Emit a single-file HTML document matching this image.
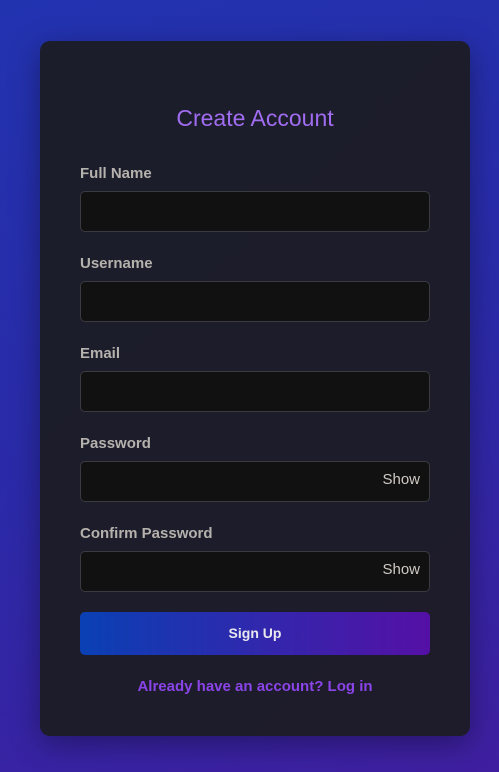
<!DOCTYPE html>
<html><head><style>
body{margin:0;width:499px;height:772px;background:linear-gradient(160deg,#2233b0 0%,#2a2aa8 50%,#3f1fa0 100%);font-family:"Liberation Sans",sans-serif;position:relative;overflow:hidden}
.card{position:absolute;left:40px;top:41px;width:430px;height:695px;background:linear-gradient(135deg,#1b1d2b,#1e1c2b);border-radius:10px;box-shadow:0 8px 30px rgba(0,0,0,.35)}
h1{position:absolute;top:63px;left:0;width:100%;margin:0;text-align:center;font-size:23px;font-weight:normal;color:#a06cf0;line-height:28px}
.lab{position:absolute;left:40px;font-size:15px;font-weight:bold;color:#b5b1ac;line-height:18px}
.inp{position:absolute;left:40px;width:348px;height:39px;background:#111;border:1px solid #3a3a40;border-radius:5px}
.show{position:absolute;right:9px;top:9px;font-size:15px;color:#cfcac4}
.btn{position:absolute;left:40px;top:571px;width:350px;height:43px;border-radius:5px;background:linear-gradient(90deg,#0a40b4,#5510a6);color:#e8e8ee;font-weight:bold;font-size:14px;text-align:center;line-height:43px}
.lnk{position:absolute;top:637px;left:0;width:100%;text-align:center;font-size:15px;color:#8a44e8;font-weight:bold}
</style></head><body>
<div class="card">
<h1>Create Account</h1>
<div class="lab" style="top:124px">Full Name</div><div class="inp" style="top:150px"></div>
<div class="lab" style="top:214px">Username</div><div class="inp" style="top:240px"></div>
<div class="lab" style="top:304px">Email</div><div class="inp" style="top:330px"></div>
<div class="lab" style="top:394px">Password</div><div class="inp" style="top:420px"><span class="show">Show</span></div>
<div class="lab" style="top:484px">Confirm Password</div><div class="inp" style="top:510px"><span class="show">Show</span></div>
<div class="btn">Sign Up</div>
<div class="lnk">Already have an account? Log in</div>
</div>
</body></html>
